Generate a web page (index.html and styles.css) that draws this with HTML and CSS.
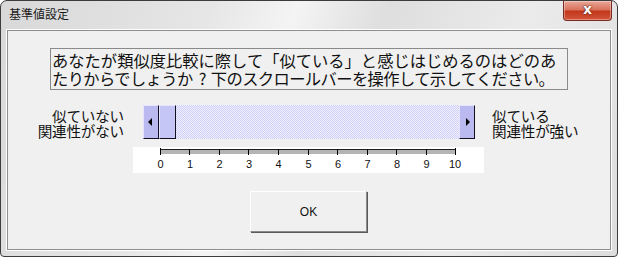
FILE: index.html
```html
<!DOCTYPE html>
<html lang="ja">
<head>
    <meta charset="UTF-8">
    <title>基準値設定</title>
    <link rel="stylesheet" href="styles.css">
</head>
<body>

    <div class="window">
        <div class="titlebar">
            <span class="title">基準値設定</span>
            <div class="close-btn">x</div>
        </div>

        <div class="client">
            <div class="question">
                <span class="line">あなたが類似度比較に際して「似ている」と感じはじめるのはどのあ</span>
                <span class="line line-2">たりからでしょうか<span class="qmark">?</span>下のスクロールバーを操作して示してください。</span>
            </div>

            <div class="slider-row">
                <div class="label label-left">似ていない<br>関連性がない</div>
                <div class="scrollbar">
                    <div class="sb-btn"><span class="arrow arrow-left"></span></div>
                    <div class="sb-thumb"></div>
                    <div class="sb-track"></div>
                    <div class="sb-btn"><span class="arrow arrow-right"></span></div>
                </div>
                <div class="label label-right">似ている<br>関連性が強い</div>
            </div>

            <div class="ruler">
                <svg width="351" height="26" viewBox="0 0 351 26">
                    <rect x="27" y="2" width="296" height="5" fill="#b4b4b4"/>
                    <rect x="27" y="2" width="296" height="1" fill="#202020"/>
                    <g fill="#000">
                        <rect x="27" y="1" width="1" height="7"/>
                        <rect x="56" y="2" width="1" height="6"/>
                        <rect x="86" y="2" width="1" height="6"/>
                        <rect x="115" y="2" width="1" height="6"/>
                        <rect x="145" y="2" width="1" height="6"/>
                        <rect x="175" y="2" width="1" height="6"/>
                        <rect x="204" y="2" width="1" height="6"/>
                        <rect x="234" y="2" width="1" height="6"/>
                        <rect x="263" y="2" width="1" height="6"/>
                        <rect x="293" y="2" width="1" height="6"/>
                        <rect x="322" y="1" width="1" height="7"/>
                    </g>
                    <g class="ruler-nums" text-anchor="middle">
                        <text x="27.5" y="21">0</text>
                        <text x="57" y="21">1</text>
                        <text x="86.5" y="21">2</text>
                        <text x="116" y="21">3</text>
                        <text x="145.5" y="21">4</text>
                        <text x="175.5" y="21">5</text>
                        <text x="205" y="21">6</text>
                        <text x="234.5" y="21">7</text>
                        <text x="264" y="21">8</text>
                        <text x="293.5" y="21">9</text>
                        <text x="322" y="21">10</text>
                    </g>
                </svg>
            </div>

            <button class="ok-button">OK</button>
        </div>
    </div>

</body>
</html>
```

FILE: styles.css
```css
body {
    margin: 0;
    width: 618px;
    height: 257px;
    overflow: hidden;
    background: #ffffff;
    font-family: "Noto Sans CJK JP", "Noto Sans", sans-serif;
}
.window {
    box-sizing: border-box;
    width: 618px;
    height: 257px;
    display: flex;
    flex-direction: column;
    border: 1px solid #3c3c3c;
    border-radius: 7px 7px 4px 4px;
    padding: 0 6px 6px 6px;
    background: linear-gradient(110deg, #d8d8d8 0%, #e6e6e6 30%, #f4f4f4 42%, #dedede 55%, #ebebeb 75%, #dcdcdc 100%);
}
.titlebar {
    height: 29px;
    display: flex;
    justify-content: space-between;
    align-items: flex-start;
    flex-shrink: 0;
}
.title {
    font-size: 12px;
    color: #1a1a1a;
    margin-top: 5px;
    margin-left: 2px;
    line-height: 16px;
}
.close-btn {
    width: 47px;
    height: 19px;
    margin-right: -1px;
    border: 1px solid #7a2a20;
    border-top: none;
    border-radius: 0 0 4px 4px;
    background: linear-gradient(#e9a798 0%, #d9735e 45%, #c3381c 55%, #d2553a 100%);
    box-shadow: inset 0 0 0 1px rgba(255, 255, 255, 0.35);
    color: #fff;
    font-family: "DejaVu Sans", sans-serif;
    font-weight: bold;
    font-size: 14px;
    line-height: 16px;
    text-align: center;
    text-shadow: 0 0 2px #5a1a10, 0 0 1px #5a1a10;
}
.client {
    flex: 1;
    display: flex;
    flex-direction: column;
    align-items: center;
    border: 1px solid #8e8e8e;
    box-shadow: 0 0 0 1px #ffffff;
    background: #f0f0f0;
    padding-top: 17px;
}
.question {
    box-sizing: border-box;
    width: 518px;
    height: 42px;
    border: 1px solid #8a8a8a;
    padding: 2px 0 0 1px;
    font-size: 16.3px;
    line-height: 18px;
    color: #111;
}
.line {
    display: block;
    white-space: nowrap;
}
.line-2 {
    letter-spacing: -0.6px;
}
.qmark {
    margin: 0 5px 0 6px;
}
.slider-row {
    width: 100%;
    display: grid;
    grid-template-columns: 1fr 332px 1fr;
    margin-top: 15px;
}
.label {
    font-size: 14.6px;
    line-height: 15px;
    color: #111;
    padding-top: 3px;
    letter-spacing: -0.2px;
}
.label-left {
    text-align: right;
    padding-right: 19px;
}
.label-right {
    padding-left: 17px;
}
.scrollbar {
    height: 34px;
    display: flex;
}
.sb-btn, .sb-thumb {
    box-sizing: border-box;
    width: 16px;
    display: flex;
    align-items: center;
    justify-content: center;
    border-top: 1px solid #e4e4ff;
    border-left: 1px solid #e4e4ff;
    border-right: 1px solid #101020;
    border-bottom: 1px solid #101020;
}
.sb-btn {
    background: #babaf0;
}
.sb-thumb {
    width: 17px;
    background: #c6c6f6;
}
.sb-track {
    flex: 1;
    background: repeating-conic-gradient(#cfcff8 0 25%, #f0f0ff 0 50%) 0 0 / 2px 2px;
}
.arrow {
    width: 0;
    height: 0;
    border-top: 4px solid transparent;
    border-bottom: 4px solid transparent;
}
.arrow-left {
    border-right: 4px solid #000;
    margin-right: 2px;
}
.arrow-right {
    border-left: 4px solid #000;
    margin-left: 2px;
}
.ruler {
    width: 351px;
    height: 26px;
    margin-top: 8px;
    margin-left: -1px;
    background: #ffffff;
}
.ruler svg {
    display: block;
}
.ruler-nums {
    font-family: "Liberation Sans", Arial, sans-serif;
    font-size: 11px;
    fill: #111;
}
.ok-button {
    box-sizing: border-box;
    width: 117px;
    height: 41px;
    margin-top: 18px;
    margin-left: -1px;
    background: #f0f0f0;
    border: 1px solid;
    border-color: #ffffff #8a8a8a #8a8a8a #ffffff;
    box-shadow: 1px 1px 0 #5a5a5a;
    font-family: "Liberation Sans", Arial, sans-serif;
    font-size: 12px;
    color: #111;
}
```
